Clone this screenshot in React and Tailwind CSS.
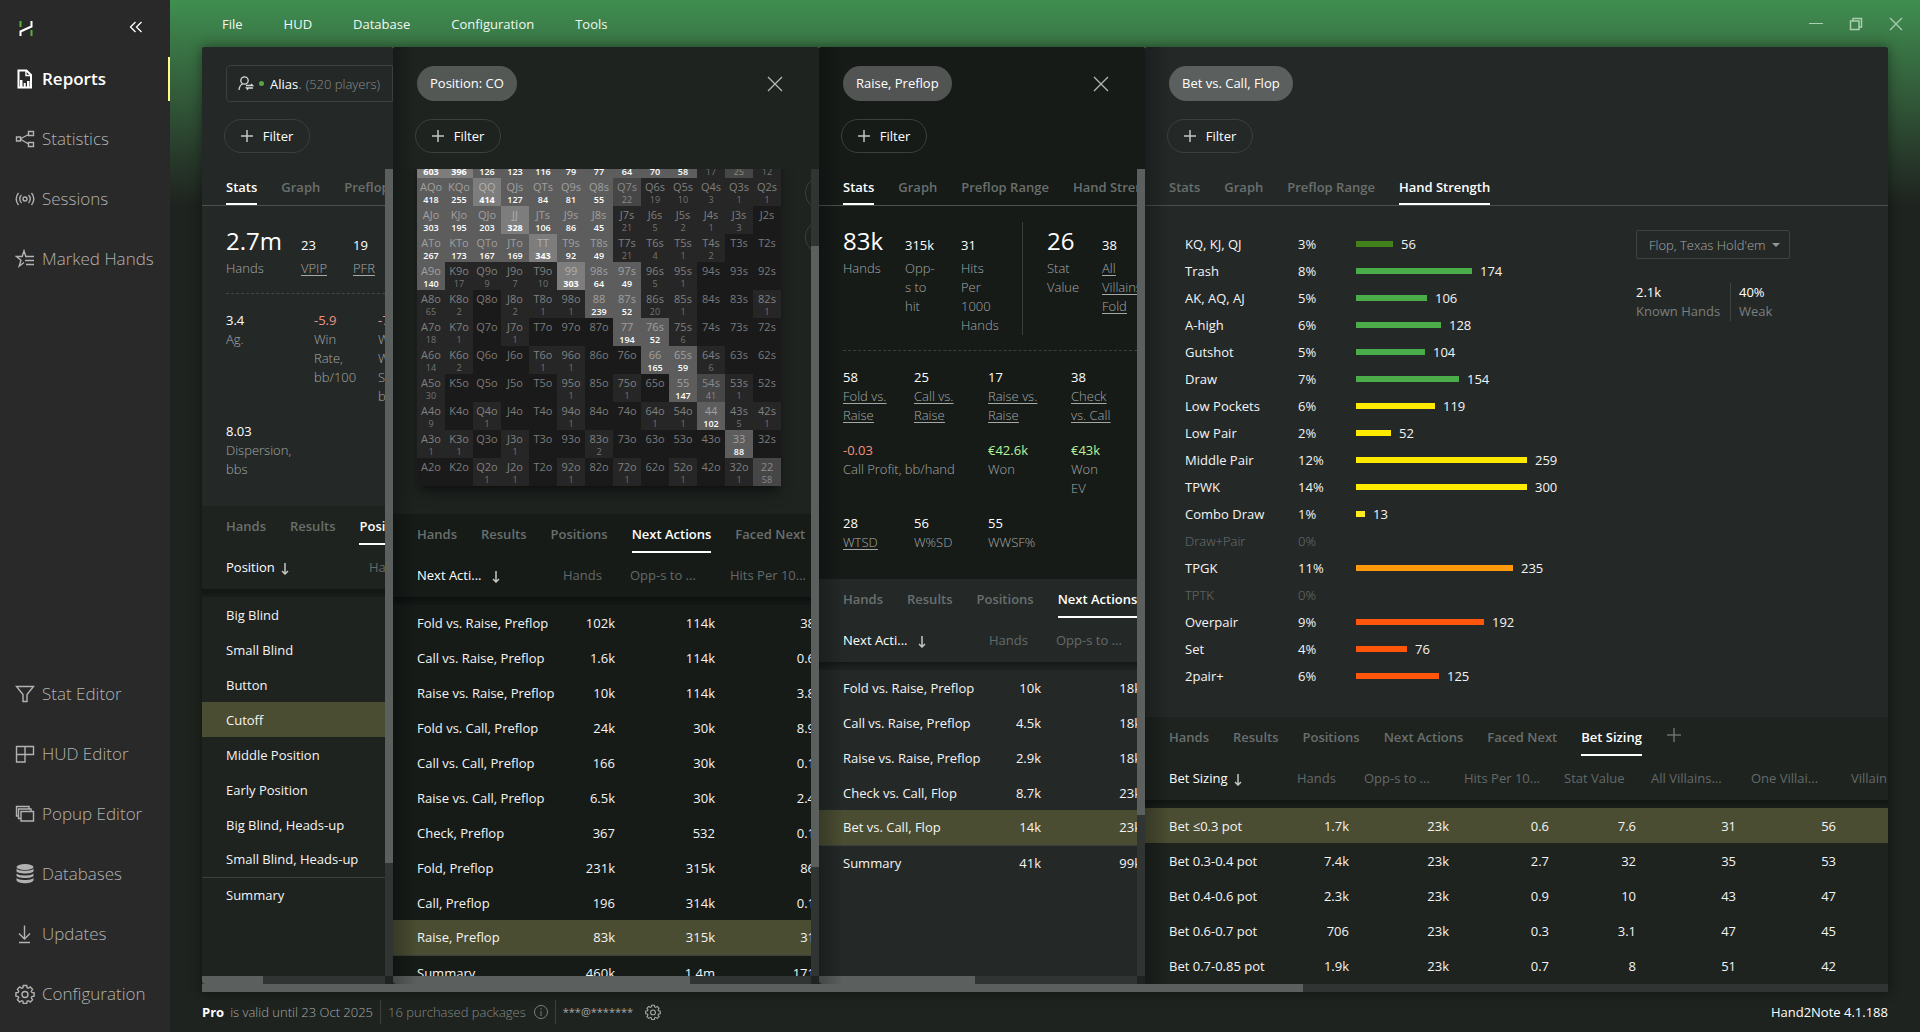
import React from 'react';
import clsx from 'clsx';

const topNav = [
  { name: 'Reports', icon: 'reports', active: true },
  { name: 'Statistics', icon: 'statistics' },
  { name: 'Sessions', icon: 'sessions' },
  { name: 'Marked Hands', icon: 'marked' },
];

const bottomNav = [
  { name: 'Stat Editor', icon: 'funnel' },
  { name: 'HUD Editor', icon: 'hud' },
  { name: 'Popup Editor', icon: 'popup' },
  { name: 'Databases', icon: 'database' },
  { name: 'Updates', icon: 'updates' },
  { name: 'Configuration', icon: 'gear' },
];

const gearPath = 'M8.3 1.5h3.4l.4 2.2 1.3.6 1.9-1.3 2.3 2.3-1.3 1.9.6 1.3 2.2.4v3.2l-2.2.4-.6 1.3 1.3 1.9-2.3 2.3-1.9-1.3-1.3.6-.4 2.2H8.3l-.4-2.2-1.3-.6-1.9 1.3-2.3-2.3 1.3-1.9-.6-1.3-2.2-.4V8.9l2.2-.4.6-1.3-1.3-1.9 2.3-2.3 1.9 1.3 1.3-.6z';

const icons = {
  reports: (
    <>
      <path d="M3.5 1.5h8l4.5 4.5v12.5H3.5z" strokeWidth="2" />
      <path d="M11 2v4.5h4.5" />
      <path d="M5 18v-7h2.500v7zM8.700 18v-4h2v4zM12 18v-6h2.500v6z" fill="currentColor" stroke="none" />
    </>
  ),
  statistics: (
    <>
      <path d="M1.500 8h4v4h-4zM13.500 2.500h5v4h-5zM13.500 13.500h5v4h-5zM6 9.500l7.500-4M6 10.500l7.500 4.500" />
    </>
  ),
  sessions: (
    <>
      <circle cx="10" cy="10" r="2" />
      <path d="M6.500 6a5.500 5.500 0 0 0 0 8M13.500 6a5.500 5.500 0 0 1 0 8M3.500 4a9 9 0 0 0 0 12M16.500 4a9 9 0 0 1 0 12" />
    </>
  ),
  marked: (
    <>
      <path d="M12 7.500h-1.200L9 1.800 7.200 7.500H1.500l4.500 3.700-1.800 6L9 13.500" />
      <path d="M11.500 7.500H19M10 11.500h9M11 15.500h8" />
    </>
  ),
  funnel: <path d="M1.500 2.500h17l-6.500 8v7H8v-7z" />,
  hud: <path d="M1.500 2.500h17v8h-17zM1.500 10.500v7.500h8.500V2.500" />,
  popup: (
    <>
      <path d="M6 7.500h12.500v9.500H6z" />
      <path d="M6 14.500H3.500V5H16v2.500M3.500 12H1.500V2.500H14V5" />
    </>
  ),
  database: (
    <g fill="currentColor" stroke="none">
      <ellipse cx="10" cy="3" rx="8.500" ry="3" />
      <path d="M1.500 4.500c1 3 16 3 17 0v2.800c-1 3-16 3-17 0z" />
      <path d="M1.500 9.200c1 3 16 3 17 0v2.600c-1 3-16 3-17 0z" />
      <path d="M1.500 13.700c1 3 16 3 17 0v2.600c-1 4-16 4-17 0z" />
    </g>
  ),
  updates: <path d="M9.500 1.500v13M4 9.500l5.500 5.500L15 9.500M4 18.500h11" />,
  gear: (
    <>
      <path d={gearPath} />
      <circle cx="10" cy="10.500" r="3" />
    </>
  ),
};

function Icon({ name, className }) {
  return (
    <svg viewBox="0 0 20 20" className={clsx('shrink-0', className)} fill="none" stroke="currentColor" strokeWidth="1.400" aria-hidden="true">
      {icons[name]}
    </svg>
  );
}

function NavItem({ name, icon, active }) {
  return (
    <a
      href="#"
      className={clsx(
        'flex items-center gap-[7px] h-[60px] pl-[15px] text-[17px]',
        active ? 'text-white font-semibold' : 'text-[#b2b2b2] font-light'
      )}
    >
      <Icon name={icon} className="size-5" />
      <span>{name}</span>
      {active && <span className="ml-auto w-[2px] h-11 bg-[#fdfd86]" />}
    </a>
  );
}

function Sidebar() {
  return (
    <aside className="w-[170px] shrink-0 flex flex-col bg-[#292929] pb-2">
      <div className="h-[49px] flex items-center justify-between pl-[19px] pr-[27px] pt-1">
        <svg width="14" height="15" viewBox="0 0 14 15" className="mt-1" aria-hidden="true">
          <path d="M1.500 0v6M12.500 9v6" stroke="#57b33c" strokeWidth="2" />
          <path d="M1.500 15v-4.500l11-5V0" stroke="#fff" strokeWidth="2" fill="none" />
        </svg>
        <button type="button" aria-label="Collapse menu">
          <svg width="14" height="12" viewBox="0 0 14 12" fill="none" stroke="#fff" strokeWidth="1.300">
            <path d="M6.500 1l-5 5 5 5M12.500 1l-5 5 5 5" />
          </svg>
        </button>
      </div>
      <nav className="flex-1 flex flex-col">
        {topNav.map((item) => <NavItem key={item.name} {...item} />)}
        <div className="flex-1" />
        {bottomNav.map((item) => <NavItem key={item.name} {...item} />)}
      </nav>
    </aside>
  );
}

function TitleBar() {
  return (
    <header className="h-[47px] shrink-0 flex items-center pl-[52px] text-[#f3f7f3] font-medium">
      <nav className="flex gap-[41px]">
        {['File', 'HUD', 'Database', 'Configuration', 'Tools'].map((m) => (
          <button type="button" key={m}>{m}</button>
        ))}
      </nav>
      <div className="ml-auto flex items-center gap-[26px] pr-[17px] text-[#a9cfb0]">
        <button type="button" aria-label="Minimize">
          <svg width="14" height="14" stroke="currentColor" fill="none"><path d="M0 6.500h14" /></svg>
        </button>
        <button type="button" aria-label="Restore">
          <svg width="14" height="14" stroke="currentColor" fill="none" strokeWidth="1.500"><path d="M1.500 4h8.500v8.500h-8.500zM4 4V1.500h8.500V10H10" /></svg>
        </button>
        <button type="button" aria-label="Close window">
          <svg width="14" height="14" stroke="currentColor" fill="none" strokeWidth="1.300"><path d="M1 1l12 12M13 1L1 13" /></svg>
        </button>
      </div>
    </header>
  );
}

function Tabs({ items, active, lower, add }) {
  return (
    <div
      className={clsx(
        'shrink-0 flex gap-6 pl-6 whitespace-nowrap font-semibold text-[#6a6f6d] overflow-hidden',
        lower ? 'h-[39px] pt-[10px]' : 'h-[37px] pt-2 border-b border-[#4c504f]'
      )}
    >
      {items.map((t) => (
        <button
          type="button"
          key={t}
          className={clsx('flex items-start border-b-2 leading-5', t === active ? 'text-white border-white' : 'border-transparent')}
        >
          {t}
        </button>
      ))}
      {add && (
        <button type="button" aria-label="Add tab" className="self-start">
          <svg width="16" height="16" stroke="#6b706e" fill="none" strokeWidth="1.500"><path d="M8 1v14M1 8h14" /></svg>
        </button>
      )}
    </div>
  );
}

function FilterButton() {
  return (
    <button type="button" className="-ml-0.5 h-[34px] w-[86px] flex items-center justify-center gap-2.5 rounded-full border border-[#3b403e] text-white font-medium">
      <svg width="12" height="12" stroke="#c3c6c4" fill="none" strokeWidth="1.500"><path d="M6 0v12M0 6h12" /></svg>
      Filter
    </button>
  );
}

function PanelHeader({ title, pill, closable, children }) {
  return (
    <div className="h-[122px] shrink-0 pl-6 pt-[18px] flex flex-col">
      <div className="h-[37px] flex items-center">
        {children}
        {title && <span className={clsx('h-[35px] leading-[35px] px-[13px] rounded-full text-white font-medium', pill)}>{title}</span>}
        {closable && (
          <button type="button" aria-label={`Close ${title}`} className="ml-auto mr-[36px]">
            <svg width="16" height="16" stroke="#b4b7b5" fill="none" strokeWidth="1.300"><path d="M1 1l14 14M15 1L1 15" /></svg>
          </button>
        )}
      </div>
      <div className="pt-[17px]">
        <FilterButton />
      </div>
    </div>
  );
}

function Stat({ value, label, link, big, tone = 'text-white', className }) {
  return (
    <div className={className}>
      {big ? (
        <div className="text-2xl leading-[37px] text-white">{value}</div>
      ) : (
        <div className={clsx('leading-[19px] font-medium', tone)}>{value}</div>
      )}
      <StatLabel label={label} link={link} />
    </div>
  );
}

// small value that shares its baseline with the big number beside it
function HeadStat({ value, label, link, className }) {
  return (
    <div className={className}>
      <div className="h-[37px] text-2xl leading-[37px] text-white">
        <span className="text-[13px] leading-none font-medium">{value}</span>
      </div>
      <StatLabel label={label} link={link} />
    </div>
  );
}

function StatLabel({ label, link }) {
  return (
    <div className={clsx('leading-[19px] whitespace-pre-line font-light text-[#a5a8a7]', link && 'underline underline-offset-2')}>
      {link ? <a href="#">{label}</a> : label}
    </div>
  );
}

function DataTable({ columns, rows, selected, width, arrow = 'ml-1.5' }) {
  return (
    <table className={clsx('table-fixed border-collapse text-left text-[#f4f4f4] font-medium', width)}>
      <thead>
        <tr className="h-11 whitespace-nowrap">
          {columns.map((c, i) => (
            <th
              key={c.label}
              scope="col"
              className={clsx(c.w, 'p-0', i === 0 ? 'pl-6 font-medium text-white' : 'pl-[15px] font-normal text-[#646968]')}
            >
              {c.label}
              {i === 0 && (
                <svg width="8" height="12" viewBox="0 0 8 12" className={clsx('inline', arrow)} fill="none" stroke="#c4c7c5" strokeWidth="1.500">
                  <path d="M4 0v10.500M1 8l3 3 3-3" />
                </svg>
              )}
            </th>
          ))}
        </tr>
      </thead>
      <tbody>
        <tr className="h-2 bg-linear-to-b from-black/40 to-black/15" aria-hidden="true"><td colSpan={columns.length} /></tr>
        {rows.map((r) => (
          <tr
            key={r[0]}
            className={clsx(
              'h-[35px] whitespace-nowrap',
              r[0] === selected && 'bg-[#4a4d31]',
              r[0] === 'Summary' && 'border-t border-[#3a403d]'
            )}
          >
            {columns.map((c, i) => (
              <td key={c.label} className={i === 0 ? 'p-0 pl-6' : 'p-0 text-right'}>{r[i]}</td>
            ))}
          </tr>
        ))}
      </tbody>
    </table>
  );
}

function Panel({ className, header, children, vThumb, hThumb, shade = true }) {
  return (
    <section className={clsx('relative flex flex-col min-w-0 overflow-hidden rounded-t-xs', className)}>
      {header}
      <div className="flex-1 min-h-0 flex">
        <div className="flex-1 min-w-0 overflow-hidden flex flex-col">{children}</div>
        {vThumb && (
          <div className="w-2 shrink-0 bg-[#303533]">
            <div className={clsx('bg-[#5b5f5d]', vThumb)} />
          </div>
        )}
      </div>
      {hThumb && (
        <div className="h-2 shrink-0 flex">
          <div className="flex-1 bg-[#303533]">
            <div className={clsx('h-2 bg-[#5b5f5d] rounded-bl-sm', hThumb)} />
          </div>
          <div className="w-2 bg-[#1f2422]" />
        </div>
      )}
      {shade && <div className="absolute inset-y-0 left-0 w-6 bg-linear-to-r from-black/25 to-transparent pointer-events-none" />}
    </section>
  );
}

const upperTabs = ['Stats', 'Graph', 'Preflop Range', 'Hand Strength'];
const lowerTabs = ['Hands', 'Results', 'Positions', 'Next Actions', 'Faced Next'];

const positions = ['Big Blind', 'Small Blind', 'Button', 'Cutoff', 'Middle Position', 'Early Position', 'Big Blind, Heads-up', 'Small Blind, Heads-up', 'Summary'];

function AliasPanel() {
  return (
    <Panel
      className="w-[191px] shrink-0 bg-[#242928]"
      vThumb="h-[86%]"
      hThumb="w-1/3"
      shade={false}
      header={
        <PanelHeader>
          <button type="button" className="h-[37px] w-full flex items-center pl-[11px] rounded-l-sm border border-[#3b403e] whitespace-nowrap">
            <svg width="16" height="15" viewBox="0 0 16 15" fill="none" stroke="#d6d8d7" strokeWidth="1.300">
              <circle cx="6.500" cy="4.500" r="3.700" />
              <path d="M1 14c.3-3.500 1.500-5 3.500-6M8 9.500h6.500L13 8M15 12H8.500l1.500 1.700" />
            </svg>
            <span className="ml-[5px] mr-1.5 size-[5px] rounded-full bg-[#57a63f]" />
            <span className="text-white font-medium">Alias</span>
            <span className="text-[#7b7f7d]">.</span>
            <span className="ml-1 font-light text-[#8a8e8c]">(520 players)</span>
          </button>
        </PanelHeader>
      }
    >
      <Tabs items={upperTabs} active="Stats" />
      <div className="ml-6 pt-4">
        <div className="flex pb-[15px] border-b border-dashed border-[#434846]">
          <Stat big value="2.7m" label="Hands" className="w-[75px] shrink-0" />
          <HeadStat value="23" label="VPIP" link className="w-[52px] shrink-0" />
          <HeadStat value="19" label="PFR" link />
        </div>
        <div className="pt-[17px] pb-[27px] grid grid-cols-[88px_64px_60px] gap-y-4">
          <Stat value="3.4" label="Ag." />
          <Stat value="-5.9" tone="text-[#f0927f]" label={'Win\nRate,\nbb/100'} />
          <Stat value="-7.1" tone="text-[#f0927f]" label={'Win\nWith\nSD,\nbb'} />
          <Stat value="8.03" label={'Dispersion,\nbbs'} />
        </div>
      </div>
      <div className="flex-1 bg-[#1e231f]">
        <Tabs lower items={lowerTabs} active="Positions" />
        <DataTable
          width="w-[219px]"
          columns={[{ label: 'Position', w: 'w-[152px]' }, { label: 'Hands', w: 'w-[67px]' }]}
          rows={positions.map((p) => [p])}
          selected="Cutoff"
        />
      </div>
    </Panel>
  );
}

const ranks = 'AKQJT98765432'.split('');

// a/b/c/d = how often the hand shows up, from frequent to rare; "-" = never
const matrix = [
  '603a 396a 126b 123b 116b 79b 77b 64b 70b 58b 17d 25c 12d',
  '418b 255b 414a 127b 84b 81b 55b 22c 19d 10d 3d 1d 1d',
  '303b 195b 203b 328a 106b 86b 45b 21d 5d 2d 1d 3d -',
  '267b 173b 167b 169b 343a 92b 49b 21d 4d 1d 2d - -',
  '140b 17d 9d 7d 10d 303a 64b 49b 5d 1d - - -',
  '65d 2d - 2d 1d 1d 239b 52b 20d 1d - - 1d',
  '18d 1d - 1d - - - 194b 52b 6d - - -',
  '14d 2d - - 1d 1d - - 165b 59b 6d - -',
  '30d - - - - 1d - 1d - 147b 41c 1d -',
  '9d - 1d - - 1d - - 1d 1d 102b 5d 1d',
  '1d 1d - 1d - - 2d - - - - 88b -',
  '- - 1d 1d - 1d - 1d - 1d - 1d 58c',
].map((r) => r.split(' '));

const cellBg = { a: 'bg-[#7d7d7d]', b: 'bg-[#5d5d5d]', c: 'bg-[#464646]', d: 'bg-[#262626]', '-': 'bg-[#1a1a1a]' };
const cellName = { a: 'text-[#b0b0b0]', b: 'text-[#a0a0a0]', c: 'text-[#8a8a8a]', d: 'text-[#808080]', '-': 'text-[#7a7a7a]' };
const cellValue = { a: 'text-white font-bold', b: 'text-white font-semibold', c: 'text-[#8a8a8a]', d: 'text-[#747474]', '-': '' };

function handName(row, col) {
  if (row === col) return ranks[row] + ranks[col];
  return row < col ? `${ranks[row]}${ranks[col]}s` : `${ranks[col]}${ranks[row]}o`;
}

function RangeMatrix() {
  return (
    <table className="ml-6 w-[364px] shrink-0 table-fixed border-collapse text-center rounded-sm shadow-lg shadow-black/40">
      <tbody>
        {matrix.map((cells, r) => (
          <tr key={r} className="h-7">
            {cells.map((cell, c) => {
              const level = cell.slice(-1);
              return (
                <td key={c} className={clsx('h-7 p-0 pt-0.5 align-top whitespace-nowrap', cellBg[level])}>
                  <div className={clsx('text-[11px] leading-[14px]', cellName[level])}>{handName(r + 1, c)}</div>
                  <div className={clsx('text-[9px] leading-[11px]', cellValue[level])}>{cell.slice(0, -1)}</div>
                </td>
              );
            })}
          </tr>
        ))}
      </tbody>
    </table>
  );
}

const cutoffRows = [
  ['Fold vs. Raise, Preflop', '102k', '114k', '38'],
  ['Call vs. Raise, Preflop', '1.6k', '114k', '0.6'],
  ['Raise vs. Raise, Preflop', '10k', '114k', '3.8'],
  ['Fold vs. Call, Preflop', '24k', '30k', '8.9'],
  ['Call vs. Call, Preflop', '166', '30k', '0.1'],
  ['Raise vs. Call, Preflop', '6.5k', '30k', '2.4'],
  ['Check, Preflop', '367', '532', '0.1'],
  ['Fold, Preflop', '231k', '315k', '86'],
  ['Call, Preflop', '196', '314k', '0.1'],
  ['Raise, Preflop', '83k', '315k', '31'],
  ['Summary', '460k', '1.4m', '171'],
];

function PositionPanel() {
  return (
    <Panel
      className="w-[426px] shrink-0 bg-[#1e2320]"
      vThumb="mt-[77px] h-[77%]"
      hThumb="w-[71%]"
      header={<PanelHeader title="Position: CO" pill="bg-[#535855]" closable />}
    >
      <div className="shrink-0 flex -mt-[19px] pb-7">
        <RangeMatrix />
        <div className="ml-6 mt-[26px] shrink-0 flex flex-col gap-2.5">
          <button type="button" aria-label="Zoom in" className="size-[34px] rounded-full border border-[#3b403e]" />
          <button type="button" aria-label="Zoom out" className="size-[34px] rounded-full border border-[#3b403e]" />
        </div>
      </div>
      <div className="flex-1 min-h-0 overflow-hidden bg-[#161b18]">
        <Tabs lower items={lowerTabs} active="Next Actions" />
        <DataTable
          width="w-[422px]"
          arrow="ml-2.5"
          columns={[
            { label: 'Next Acti...', w: 'w-[155px]' },
            { label: 'Hands', w: 'w-[67px]' },
            { label: 'Opp-s to ...', w: 'w-[100px]' },
            { label: 'Hits Per 10...', w: 'w-[100px]' },
          ]}
          rows={cutoffRows}
          selected="Raise, Preflop"
        />
      </div>
    </Panel>
  );
}

const raiseRows = [
  ['Fold vs. Raise, Preflop', '10k', '18k'],
  ['Call vs. Raise, Preflop', '4.5k', '18k'],
  ['Raise vs. Raise, Preflop', '2.9k', '18k'],
  ['Check vs. Call, Flop', '8.7k', '23k'],
  ['Bet vs. Call, Flop', '14k', '23k'],
  ['Summary', '41k', '99k'],
];

function RaisePanel() {
  return (
    <Panel
      className="w-[326px] shrink-0 bg-[#161b18]"
      vThumb="h-4/5"
      hThumb="w-[49%]"
      header={<PanelHeader title="Raise, Preflop" pill="bg-[#525454]" closable />}
    >
      <Tabs items={upperTabs} active="Stats" />
      <div className="ml-6 pt-4">
        <div className="flex pb-[15px] border-b border-dashed border-[#3a3f3c]">
          <Stat big value="83k" label="Hands" className="w-[62px] shrink-0" />
          <HeadStat value="315k" label={'Opp-\ns to\nhit'} className="w-14 shrink-0" />
          <HeadStat value="31" label={'Hits\nPer\n1000\nHands'} className="w-[61px] shrink-0" />
          <div className="w-[25px] shrink-0 border-l border-[#3a3f3c]" />
          <Stat big value="26" label={'Stat\nValue'} className="w-[55px] shrink-0" />
          <HeadStat value="38" label={'All\nVillains\nFold'} link className="shrink-0" />
        </div>
        <div className="pt-[17px] pb-[27px] grid grid-cols-[71px_74px_83px_60px] gap-y-4">
          <Stat link value="58" label={'Fold vs.\nRaise'} />
          <Stat link value="25" label={'Call vs.\nRaise'} />
          <Stat link value="17" label={'Raise vs.\nRaise'} />
          <Stat link value="38" label={'Check\nvs. Call'} />
          <Stat value="-0.03" tone="text-[#f0927f]" label="Call Profit, bb/hand" className="col-span-2" />
          <Stat value="€42.6k" tone="text-[#b5f39a]" label="Won" />
          <Stat value="€43k" tone="text-[#b5f39a]" label={'Won\nEV'} />
          <Stat link value="28" label="WTSD" />
          <Stat value="56" label="W%SD" />
          <Stat value="55" label="WWSF%" />
        </div>
      </div>
      <div className="flex-1 bg-[#242928]">
        <Tabs lower items={lowerTabs} active="Next Actions" />
        <DataTable
          width="w-[322px]"
          arrow="ml-2.5"
          columns={[
            { label: 'Next Acti...', w: 'w-[155px]' },
            { label: 'Hands', w: 'w-[67px]' },
            { label: 'Opp-s to ...', w: 'w-[100px]' },
          ]}
          rows={raiseRows}
          selected="Bet vs. Call, Flop"
        />
      </div>
    </Panel>
  );
}

const strengths = [
  ['KQ, KJ, QJ', 3, 56, 'bg-[#42811b]'],
  ['Trash', 8, 174, 'bg-[#4aad4a]'],
  ['AK, AQ, AJ', 5, 106, 'bg-[#4aad4a]'],
  ['A-high', 6, 128, 'bg-[#4aad4a]'],
  ['Gutshot', 5, 104, 'bg-[#4aad4a]'],
  ['Draw', 7, 154, 'bg-[#4aad4a]'],
  ['Low Pockets', 6, 119, 'bg-[#ffea00]'],
  ['Low Pair', 2, 52, 'bg-[#ffea00]'],
  ['Middle Pair', 12, 259, 'bg-[#ffea00]'],
  ['TPWK', 14, 300, 'bg-[#ffea00]'],
  ['Combo Draw', 1, 13, 'bg-[#ffea20]'],
  ['Draw+Pair', 0, 0, ''],
  ['TPGK', 11, 235, 'bg-[#ff9a0c]'],
  ['TPTK', 0, 0, ''],
  ['Overpair', 9, 192, 'bg-[#ff560c]'],
  ['Set', 4, 76, 'bg-[#ff560c]'],
  ['2pair+', 6, 125, 'bg-[#ff560c]'],
];

function StrengthChart() {
  return (
    <table className="table-fixed w-[420px] text-left border-collapse">
      <tbody>
        {strengths.map(([name, pct, count, color]) => (
          <tr key={name} className={clsx('h-[27px]', count ? 'text-[#f4f4f4]' : 'text-[#6f7472]')}>
            <th scope="row" className={clsx('w-[113px] p-0', count ? 'font-medium' : 'font-light')}>{name}</th>
            <td className={clsx('w-[58px] p-0', count ? 'font-medium' : 'font-light')}>{pct}%</td>
            <td className="p-0">
              {count > 0 && (
                <div className="flex items-center gap-2 leading-5">
                  <div className={clsx('h-1.5', color)} style={{ width: Math.min(171, Math.round((count * 2) / 3)) }} />
                  {count}
                </div>
              )}
            </td>
          </tr>
        ))}
      </tbody>
    </table>
  );
}

const betRows = [
  ['Bet ≤0.3 pot', '1.7k', '23k', '0.6', '7.6', '31', '56'],
  ['Bet 0.3-0.4 pot', '7.4k', '23k', '2.7', '32', '35', '53'],
  ['Bet 0.4-0.6 pot', '2.3k', '23k', '0.9', '10', '43', '47'],
  ['Bet 0.6-0.7 pot', '706', '23k', '0.3', '3.1', '47', '45'],
  ['Bet 0.7-0.85 pot', '1.9k', '23k', '0.7', '8', '51', '42'],
];

function BetPanel() {
  return (
    <Panel className="flex-1 bg-[#242928]" header={<PanelHeader title="Bet vs. Call, Flop" pill="bg-[#5b5f5d]" />}>
      <Tabs items={upperTabs} active="Hand Strength" />
      <div className="flex pl-10 pt-6 pb-7">
        <StrengthChart />
        <div className="ml-[31px]">
          <div className="relative w-[154px]">
            <select
              aria-label="Street and game"
              className="w-full h-[29px] pl-3 appearance-none rounded-xs border border-[#3f4442] bg-transparent font-light text-[#a5a8a7] whitespace-nowrap"
            >
              <option>Flop, Texas Hold'em</option>
            </select>
            <svg width="8" height="4" className="absolute right-[10px] top-[13px] pointer-events-none" fill="#949796"><path d="M0 0h8L4 4z" /></svg>
          </div>
          <div className="flex mt-6 leading-[19px]">
            <div className="w-[94px]">
              <div className="text-white font-medium">2.1k</div>
              <div className="text-[#7b7f7d] whitespace-nowrap">Known Hands</div>
            </div>
            <div className="pl-2 border-l border-[#3f4442]">
              <div className="text-white font-medium">40%</div>
              <div className="text-[#7b7f7d]">Weak</div>
            </div>
          </div>
        </div>
      </div>
      <div className="flex-1 min-h-0 overflow-hidden bg-[#1e231f]">
        <Tabs lower add items={[...lowerTabs, 'Bet Sizing']} active="Bet Sizing" />
        <DataTable
          width="w-[791px]"
          columns={[
            { label: 'Bet Sizing', w: 'w-[137px]' },
            { label: 'Hands', w: 'w-[67px]' },
            { label: 'Opp-s to ...', w: 'w-[100px]' },
            { label: 'Hits Per 10...', w: 'w-[100px]' },
            { label: 'Stat Value', w: 'w-[87px]' },
            { label: 'All Villains...', w: 'w-[100px]' },
            { label: 'One Villai...', w: 'w-[100px]' },
            { label: 'Villain ...', w: 'w-[100px]' },
          ]}
          rows={betRows}
          selected="Bet ≤0.3 pot"
        />
      </div>
    </Panel>
  );
}

function StatusBar() {
  return (
    <footer className="h-10 shrink-0 flex items-center pl-8 pr-8 text-[#a5a8a7] font-light">
      <span className="font-bold text-white">Pro</span>
      <span className="ml-1.5">is valid until 23 Oct 2025</span>
      <span className="mx-[7px] w-px h-6 bg-[#3b403e]" />
      <span className="text-[#858987]">16 purchased packages</span>
      <svg width="14" height="14" viewBox="0 0 14 14" className="ml-2" fill="none" stroke="#7b7f7d">
        <circle cx="7" cy="7" r="6.500" />
        <path d="M7 6v5M7 3v1.500" />
      </svg>
      <span className="mx-[7px] w-px h-6 bg-[#3b403e]" />
      <span className="text-[11px] font-normal">***@*******</span>
      <button type="button" aria-label="Account settings" className="ml-3">
        <Icon name="gear" className="size-4" />
      </button>
      <span className="ml-auto text-white font-medium">Hand2Note 4.1.188</span>
    </footer>
  );
}

export default function App() {
  return (
    <div className="h-screen flex overflow-hidden bg-[#1e231f] font-['Open_Sans',sans-serif] text-[13px] leading-5">
      <Sidebar />
      <div className="flex-1 min-w-0 flex flex-col bg-linear-to-b from-[#3f8f50] to-[#1e231f] to-[205px]">
        <TitleBar />
        <main className="flex-1 min-h-0 flex flex-col mx-8 shadow-[0_0_12px_rgba(0,0,0,0.45)]">
          <div className="flex-1 min-h-0 flex">
            <AliasPanel />
            <PositionPanel />
            <RaisePanel />
            <BetPanel />
          </div>
          <div className="h-2 shrink-0 bg-[#303533]">
            <div className="h-2 w-[65.3%] bg-[#5b5f5d]" />
          </div>
        </main>
        <StatusBar />
      </div>
    </div>
  );
}
